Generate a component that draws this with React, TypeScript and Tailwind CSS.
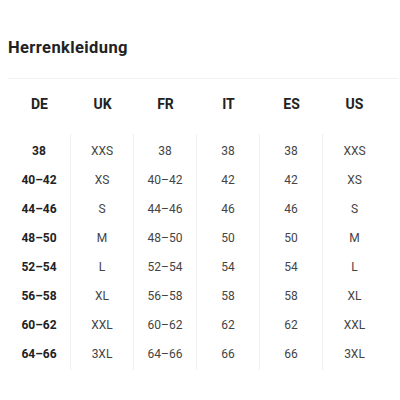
const headers = ['DE', 'UK', 'FR', 'IT', 'ES', 'US']

const rows = [
	['38', 'XXS', '38', '38', '38', 'XXS'],
	['40–42', 'XS', '40–42', '42', '42', 'XS'],
	['44–46', 'S', '44–46', '46', '46', 'S'],
	['48–50', 'M', '48–50', '50', '50', 'M'],
	['52–54', 'L', '52–54', '54', '54', 'L'],
	['56–58', 'XL', '56–58', '58', '58', 'XL'],
	['60–62', 'XXL', '60–62', '62', '62', 'XXL'],
	['64–66', '3XL', '64–66', '66', '66', '3XL'],
]

export default function App() {
	return (
		<div className="w-[400px] h-[400px] bg-white pl-2 pr-[2px] pt-[37px] font-['Roboto',sans-serif] text-[#222]">
			<h1 className="text-[16.5px] font-bold leading-[22px] tracking-[0.4px]">Herrenkleidung</h1>

			<div className="mt-[19px] border-t border-[#f1f1f1]">
				{/* Kopfzeile */}
				<div className="grid grid-cols-[repeat(6,63px)] h-[55px] pt-[16px]">
					{headers.map((h) => (
						<div key={h} className="text-center text-[14px] font-bold leading-[18px]">
							{h}
						</div>
					))}
				</div>

				{/* Größentabelle */}
				<div className="grid grid-cols-[repeat(6,63px)]">
					{headers.map((h, c) => (
						<div
							key={h}
							className={c < 5 ? 'border-r border-[#f0f0f0] pt-[2px] pb-[2px]' : 'pt-[2px] pb-[2px]'}
						>
							{rows.map((r, i) => (
								<div
									key={i}
									className={
										c === 0
											? 'h-[29px] flex items-center justify-center text-[12px] font-bold text-[#222]'
											: 'h-[29px] flex items-center justify-center text-[12px] text-[#444]'
									}
								>
									{r[c]}
								</div>
							))}
						</div>
					))}
				</div>
			</div>
		</div>
	)
}
